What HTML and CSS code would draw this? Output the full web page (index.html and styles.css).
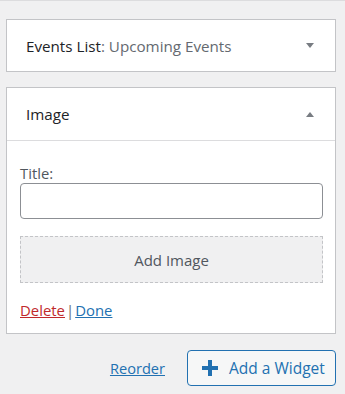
FILE: index.html
```html
<!DOCTYPE html>
<html>
<head>
<meta charset="utf-8">
<link rel="stylesheet" href="styles.css">
</head>
<body>
<div class="panel">
  <div class="widget">
    <div class="widget-top">
      <h3 class="widget-title">Events List<span class="in-title">: Upcoming Events</span></h3>
      <span class="arrow arrow-down"></span>
    </div>
  </div>
  <div class="widget open">
    <div class="widget-top">
      <h3 class="widget-title">Image</h3>
      <span class="arrow arrow-up"></span>
    </div>
    <div class="widget-inside">
      <label class="field-label" for="title">Title:</label>
      <input class="text-input" id="title" type="text">
      <div class="add-image">Add Image</div>
      <div class="actions"><a class="link-delete" href="#">Delete</a><span class="sep">|</span><a class="link-done" href="#">Done</a></div>
    </div>
  </div>
  <div class="footer">
    <a class="reorder" href="#">Reorder</a>
    <button class="add-widget" type="button">
      <svg class="plus" width="16" height="16" viewBox="0 0 16 16"><path d="M6 0h4v6h6v4h-6v6h-4v-6h-6v-4h6z" fill="#2271b1"/></svg>
      <span>Add a Widget</span>
    </button>
  </div>
</div>
</body>
</html>
```

FILE: styles.css
```css
html, body {
  margin: 0;
  padding: 0;
}
body {
  background: #f0f0f1;
  border-top: 1px solid #dcdcde;
  font-family: "Open Sans", "Noto Sans", sans-serif;
  font-size: 15px;
  color: #1d2327;
  height: 393px;
}
.panel {
  padding: 18px 9px 0 6px;
}
.widget {
  background: #fff;
  border: 1px solid #c3c4c7;
}
.widget + .widget {
  margin-top: 15px;
}
.widget-top {
  height: 51px;
  display: flex;
  align-items: center;
  justify-content: space-between;
  padding: 0 21px 0 19px;
}
.open .widget-top {
  height: 52px;
  border-bottom: 1px solid #dcdcde;
}
.widget-title {
  margin: 0;
  font-size: 15.2px;
  font-weight: 400;
  color: #1d2327;
}
.in-title {
  color: #646970;
}
.arrow {
  width: 0;
  height: 0;
  border-left: 4px solid transparent;
  border-right: 4px solid transparent;
}
.arrow-down {
  border-top: 5px solid #787c82;
}
.arrow-up {
  border-bottom: 5px solid #787c82;
}
.widget-inside {
  padding: 22px 12px 13px 13px;
  display: flex;
  flex-direction: column;
}
.field-label {
  font-size: 14.8px;
  line-height: 20px;
  color: #50575e;
}
.text-input {
  box-sizing: border-box;
  height: 36px;
  width: 100%;
  border: 1px solid #8c8f94;
  border-radius: 4px;
  margin: 0;
  background: #fff;
}
.add-image {
  box-sizing: border-box;
  margin-top: 17px;
  height: 47px;
  border: 1px dashed #c3c4c7;
  background: #f0f0f1;
  display: flex;
  align-items: center;
  justify-content: center;
  font-size: 15px;
  color: #50575e;
}
.actions {
  margin-top: 17px;
  line-height: 20px;
  font-size: 14.9px;
}
.link-delete {
  color: #c0292b;
}
.link-done {
  color: #2271b1;
}
.sep {
  color: #646970;
  margin: 0 1px;
}
.footer {
  display: flex;
  justify-content: flex-end;
  align-items: center;
  gap: 22px;
  margin-top: 16px;
}
.reorder {
  color: #2271b1;
  font-size: 14.6px;
}
.add-widget {
  box-sizing: border-box;
  width: 149px;
  height: 36px;
  border: 1px solid #2271b1;
  border-radius: 4px;
  background: #f6f7f7;
  color: #2271b1;
  font-family: inherit;
  font-size: 15.5px;
  display: flex;
  align-items: center;
  gap: 11px;
  padding: 0 0 0 14px;
}
.plus {
  display: block;
  flex: none;
}
```
